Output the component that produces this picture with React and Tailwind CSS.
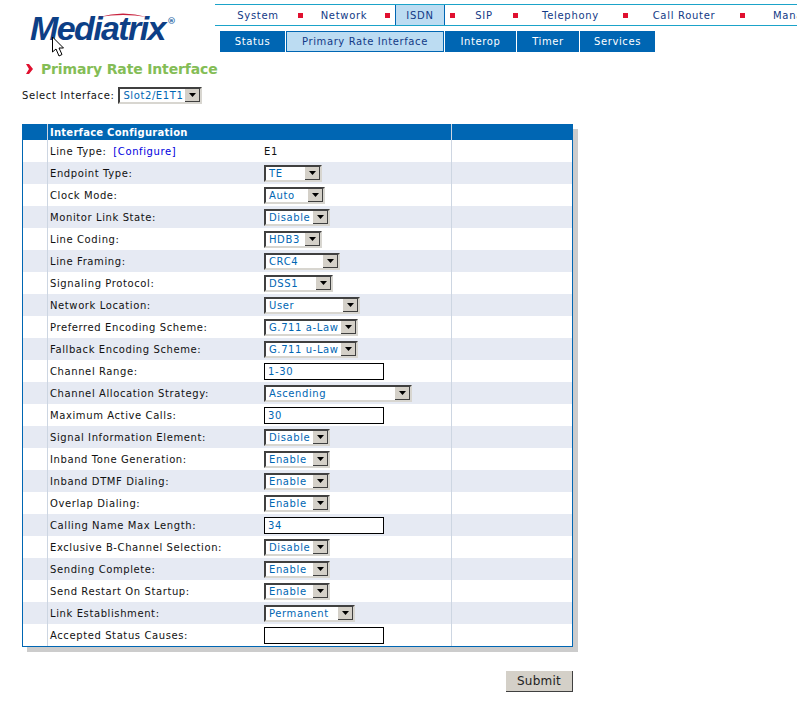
const TOP_MENU = [
  { label: "System", w: "w-[88px]", pad: "pl-[3px]", bullet: true },
  { label: "Network", w: "w-[92px]", gap: "mr-[5px]", bullet: true },
  { label: "ISDN", w: "w-[50px]", active: true },
  { label: "SIP", w: "w-[73px]", bullet: true, lead: true },
  { label: "Telephony", w: "w-[110px]", bullet: true },
  { label: "Call Router", w: "w-[117px]", bullet: true },
  { label: "Management", w: "w-[120px]", pad: "pl-[28px]", left: true },
]

const SUB_MENU = [
  { label: "Status", w: "w-[65px]" },
  { label: "Primary Rate Interface", w: "w-[158px]", active: true },
  { label: "Interop", w: "w-[71px]" },
  { label: "Timer", w: "w-[62px]" },
  { label: "Services", w: "w-[75px]" },
]

const ROWS = [
  { label: "Line Type:", link: "[Configure]", text: "E1" },
  { label: "Endpoint Type:", select: "TE", w: "w-[58px]" },
  { label: "Clock Mode:", select: "Auto", w: "w-[61px]" },
  { label: "Monitor Link State:", select: "Disable", w: "w-[66px]" },
  { label: "Line Coding:", select: "HDB3", w: "w-[58px]" },
  { label: "Line Framing:", select: "CRC4", w: "w-[76px]" },
  { label: "Signaling Protocol:", select: "DSS1", w: "w-[69px]" },
  { label: "Network Location:", select: "User", w: "w-[96px]" },
  { label: "Preferred Encoding Scheme:", select: "G.711 a-Law", w: "w-[94px]" },
  { label: "Fallback Encoding Scheme:", select: "G.711 u-Law", w: "w-[94px]" },
  { label: "Channel Range:", input: "1-30" },
  { label: "Channel Allocation Strategy:", select: "Ascending", w: "w-[148px]" },
  { label: "Maximum Active Calls:", input: "30" },
  { label: "Signal Information Element:", select: "Disable", w: "w-[66px]" },
  { label: "Inband Tone Generation:", select: "Enable", w: "w-[66px]" },
  { label: "Inband DTMF Dialing:", select: "Enable", w: "w-[66px]" },
  { label: "Overlap Dialing:", select: "Enable", w: "w-[66px]" },
  { label: "Calling Name Max Length:", input: "34" },
  { label: "Exclusive B-Channel Selection:", select: "Disable", w: "w-[66px]" },
  { label: "Sending Complete:", select: "Enable", w: "w-[66px]" },
  { label: "Send Restart On Startup:", select: "Enable", w: "w-[66px]" },
  { label: "Link Establishment:", select: "Permanent", w: "w-[91px]" },
  { label: "Accepted Status Causes:", input: "" },
]

// old windows style combo box
function Combo({ value, w }) {
  return (
    <div className={`${w} h-[17px] flex items-center bg-white border-2 border-t-[#404040] border-l-[#404040] border-r-[#d8d6d0] border-b-[#d8d6d0]`}>
      <span className="flex-1 min-w-0 pl-[3px] text-[#0066b3] whitespace-nowrap">{value}</span>
      <span className="w-[15px] h-[13px] shrink-0 flex items-center justify-center bg-[#d4d0c8] border-r border-b border-[#404040]">
        <svg width="7" height="4" viewBox="0 0 7 4">
          <path d="M0 0 H7 L3.5 4 Z" fill="#000" />
        </svg>
      </span>
    </div>
  )
}

function ConfigRow({ row, index }) {
  return (
    <div className={`flex h-[22px] items-center ${index % 2 === 1 ? "bg-[#e6eaf3]" : "bg-white"}`}>
      <div className="w-[25px] h-full border-r border-[#cdd6e2]" />
      <div className="w-[216px] pl-[2px] text-[#111] whitespace-nowrap">
        {row.label}
        {row.link && <span className="ml-[7px] text-[#0000e0]">{row.link}</span>}
      </div>
      <div className="w-[187px] h-full flex items-center">
        {row.text && <span className="text-[#111]">{row.text}</span>}
        {row.select && <Combo value={row.select} w={row.w} />}
        {row.input !== undefined && (
          <div className="w-[120px] h-[17px] pl-[3px] bg-white border border-black leading-[15px] text-[#0066b3]">{row.input}</div>
        )}
      </div>
      <div className="flex-1 h-full border-l border-[#cdd6e2]" />
    </div>
  )
}

export default function App() {
  return (
    <div className="w-[797px] h-[713px] overflow-hidden bg-white text-[10px] tracking-[0.6px] font-['DejaVu_Sans',sans-serif]">

      {/* cabecera */}
      <div className="flex h-[52px] pt-[4px] items-start">
        <div className="relative w-[215px] h-[48px] shrink-0">
          <span className="absolute left-[30px] top-[4px] text-[34px] leading-[40px] tracking-[-1.6px] font-bold italic text-[#0d3f86] font-['Liberation_Sans',sans-serif]">Mediatrix</span>
          <svg width="60" height="10" viewBox="0 0 60 10" className="absolute left-[95px] top-[7px]">
            <path d="M 4 6 Q 28 -1 52 6 Q 28 2 4 6 Z" fill="#c8203c" />
          </svg>
          <span className="absolute left-[167px] top-[12px] text-[9px] leading-[10px] font-bold tracking-[0] text-[#2a6aa8]">®</span>
          <svg width="14" height="22" viewBox="0 0 14 22" className="absolute left-[51px] top-[32px]">
            <path d="M1.5 1 L1.5 16 L5 13 L8 20 L11 18.5 L8 12 L12.5 12 Z" fill="#fff" stroke="#000" strokeWidth="1" />
          </svg>
        </div>
        <div className="flex-1 min-w-0">
          <div className="flex h-[22px] w-[800px] items-center border-y border-[#1ba3c9] text-[#123a86]">
            {TOP_MENU.map(item => (
              <div key={item.label} className={`${item.w} h-full shrink-0 flex items-center ${item.active ? "bg-[#bcdcf2] border-x border-x-[#0066b3]" : ""}`}>
                {item.lead && <span className="w-[5px] h-[5px] bg-[#e0102f] shrink-0 ml-[5px]" />}
                <span className={`flex-1 whitespace-nowrap tracking-[0.7px] ${item.left ? "text-left" : "text-center"} ${item.pad || ""}`}>{item.label}</span>
                {item.bullet && <span className={`w-[5px] h-[5px] bg-[#e0102f] shrink-0 ${item.gap || ""}`} />}
              </div>
            ))}
          </div>
          <div className="flex gap-[1px] ml-[5px] mt-[5px]">
            {SUB_MENU.map(item => (
              <div key={item.label} className={`${item.w} h-[21px] flex items-center justify-center ${item.active ? "bg-[#bcdcf2] border border-[#0066b3] text-[#123a86]" : "bg-[#0066b3] text-white"}`}>
                {item.label}
              </div>
            ))}
          </div>
        </div>
      </div>

      <div className="flex items-center h-[18px] mt-[8px] pl-[26px]">
        <svg width="7" height="10" viewBox="0 0 7 10" className="shrink-0">
          <path d="M0 0 H3 L7 5 L3 10 H0 L3 5 Z" fill="#e0102f" />
        </svg>
        <h1 className="ml-[8px] text-[14px] font-bold tracking-[-0.15px] text-[#84bd56]">Primary Rate Interface</h1>
      </div>

      <div className="flex items-center ml-[22px] mt-[9px] h-[17px] text-[#111]">
        <span className="mr-[4px]">Select Interface:</span>
        <Combo value="Slot2/E1T1" w="w-[84px]" />
      </div>

      {/* tabla con sombra */}
      <div className="ml-[22px] mt-[20px] w-[551px] shadow-[5px_5px_0_0_#cccccc]">
        <div className="flex h-[16px] items-center bg-[#0066b3] text-white font-bold">
          <div className="w-[26px] h-full border-r border-[#cdd6e2]" />
          <div className="w-[403px] pl-[2px] tracking-[0.25px]">Interface Configuration</div>
          <div className="flex-1 h-full border-l border-[#cdd6e2]" />
        </div>
        <div className="border-x border-b border-[#0066b3]">
          {ROWS.map((row, i) => <ConfigRow key={row.label} row={row} index={i} />)}
        </div>
      </div>

      <div className="flex justify-end w-[573px] mt-[24px]">
        <button className="w-[67px] h-[21px] text-[12px] tracking-[0.25px] text-[#222] bg-[#d4d0c8] border-r border-b border-[#404040]">Submit</button>
      </div>
    </div>
  )
}
